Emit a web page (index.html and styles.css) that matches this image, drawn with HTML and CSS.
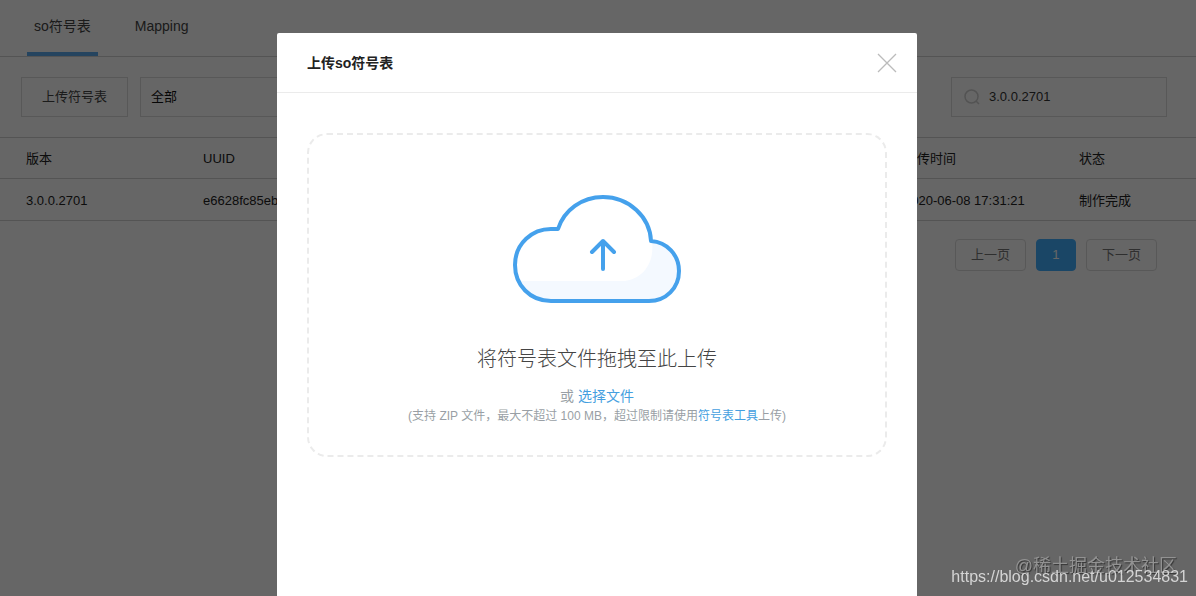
FILE: index.html
```html
<!DOCTYPE html>
<html lang="zh-CN">

<head>
    <meta charset="UTF-8">
    <meta name="viewport" content="width=device-width, initial-scale=1.0">
    <title>符号表管理</title>
    <link rel="stylesheet" href="styles.css">
</head>

<body>
    <main class="page">
        <nav class="tabs">
            <a class="tab active" href="#so">so符号表</a>
            <a class="tab" href="#mapping">Mapping</a>
        </nav>

        <div class="toolbar">
            <button class="btn-upload" type="button">上传符号表</button>
            <select class="filter" aria-label="版本">
                <option>全部</option>
            </select>
            <label class="search">
                <svg class="search-icon" viewBox="0 0 16 16" aria-hidden="true">
                    <circle cx="7.5" cy="7.5" r="6.5" />
                    <path d="M12 12l3 3" />
                </svg>
                <input type="text" value="3.0.0.2701" aria-label="搜索版本">
            </label>
        </div>

        <table class="list">
            <thead>
                <tr>
                    <th class="col-version">版本</th>
                    <th>UUID</th>
                    <th class="col-time">上传时间</th>
                    <th class="col-status">状态</th>
                </tr>
            </thead>
            <tbody>
                <tr>
                    <td>3.0.0.2701</td>
                    <td>e6628fc85eb3</td>
                    <td>2020-06-08 17:31:21</td>
                    <td>制作完成</td>
                </tr>
            </tbody>
        </table>

        <div class="pagination">
            <button class="page-btn" type="button">上一页</button>
            <button class="page-btn current" type="button">1</button>
            <button class="page-btn" type="button">下一页</button>
        </div>
    </main>

    <div class="overlay">
        <section class="modal" role="dialog" aria-labelledby="modalTitle">
            <header class="modal-header">
                <h2 id="modalTitle">上传so符号表</h2>
                <button class="close" type="button" aria-label="关闭">
                    <svg viewBox="0 0 20 20" aria-hidden="true">
                        <path d="M1 1l18 18M19 1L1 19" />
                    </svg>
                </button>
            </header>
            <div class="modal-body">
                <div class="dropzone">
                    <svg class="cloud" viewBox="0 0 168 108" aria-hidden="true">
                        <path class="cloud-shade" d="M6 86H112C128 84 142 70 139 46C154 47 166 60 166 76C166 93 153 106 136 106H38C24 104 12 98 6 86Z" />
                        <path class="cloud-line" d="M38 106C17 106 2 90 2 70C2 49 19 33 40 34H45C51 15 69 2 90 2C116 2 137 22 138 46C154 47 166 60 166 76C166 93 153 106 136 106Z" />
                        <path class="cloud-line" d="M90 74V46M79 57L90 46L101 57" />
                    </svg>
                    <p class="drop-title">将符号表文件拖拽至此上传</p>
                    <p class="drop-choose">或 <a href="#file">选择文件</a></p>
                    <p class="drop-tip">(支持 ZIP 文件，最大不超过 100 MB，超过限制请使用<a href="#tool">符号表工具</a>上传)</p>
                </div>
            </div>
        </section>
    </div>

    <div class="mark mark-site">@稀土掘金技术社区</div>
    <div class="mark mark-url">https://blog.csdn.net/u012534831</div>
</body>

</html>
```

FILE: styles.css
```css
* {
    box-sizing: border-box;
}

body {
    margin: 0;
    height: 100vh;
    overflow: hidden;
    background: #fff;
    color: #333;
    font-family: "Liberation Sans", "Noto Sans CJK SC", sans-serif;
    font-size: 13px;
    line-height: 20px;
}

a {
    text-decoration: none;
}

button,
input,
select {
    font: inherit;
    color: inherit;
}

p,
h2 {
    margin: 0;
}

/* page behind the dialog */
.tabs {
    display: flex;
    gap: 30px;
    height: 57px;
    padding: 0 27px;
    border-bottom: 1px solid #d2d2d2;
}

.tab {
    height: 56px;
    padding: 0 7px;
    border-bottom: 4px solid transparent;
    color: #444;
    font-size: 14px;
    line-height: 52px;
}

.tab.active {
    border-bottom-color: #5cabee;
}

.toolbar {
    display: flex;
    gap: 12px;
    padding: 20px 29px 20px 21px;
}

.btn-upload {
    height: 40px;
    padding: 0 20px;
    border: 1px solid #dcdcdc;
    background: #fff;
    color: #444;
}

.filter {
    width: 180px;
    height: 40px;
    padding: 0 10px;
    border: 1px solid #dcdcdc;
    background: #fff;
    color: #111;
    appearance: none;
}

.search {
    display: flex;
    align-items: center;
    gap: 9px;
    width: 216px;
    height: 40px;
    margin-left: auto;
    padding: 0 12px;
    border: 1px solid #dcdcdc;
}

.search-icon {
    flex: none;
    width: 16px;
    height: 16px;
    fill: none;
    stroke: #d0d0d0;
    stroke-width: 1.5;
}

.search input {
    width: 100%;
    padding: 0;
    border: 0;
    outline: 0;
    background: transparent;
}

.list {
    width: 100%;
    border-collapse: collapse;
    table-layout: fixed;
    border-top: 1px solid #d2d2d2;
}

.list th,
.list td {
    height: 41px;
    padding: 2px 0 0;
    border-bottom: 1px solid #d2d2d2;
    color: #222;
    font-weight: normal;
    text-align: left;
}

.list td {
    height: 42px;
}

.list th:first-child,
.list td:first-child {
    padding-left: 26px;
}

.col-version {
    width: 203px;
}

.col-time {
    width: 175px;
}

.col-status {
    width: 117px;
}

.pagination {
    display: flex;
    justify-content: flex-end;
    gap: 10px;
    padding: 18px 39px;
}

.page-btn {
    height: 32px;
    padding: 0 15px;
    border: 1px solid #dcdcdc;
    border-radius: 4px;
    background: #fff;
    color: #777;
}

.page-btn.current {
    min-width: 40px;
    border-color: #43b0ff;
    background: #43b0ff;
    color: #fff;
}

/* dialog */
.overlay {
    position: fixed;
    inset: 0;
    display: flex;
    justify-content: center;
    padding: 33px 2px 0 0;
    background: rgba(0, 0, 0, 0.6);
}

.modal {
    width: 640px;
    border-radius: 2px 2px 0 0;
    background: #fff;
}

.modal-header {
    display: flex;
    align-items: center;
    justify-content: space-between;
    height: 60px;
    padding: 0 20px 0 30px;
    border-bottom: 1px solid #ebebeb;
}

.modal-header h2 {
    color: #222;
    font-size: 14px;
}

.close {
    width: 20px;
    height: 20px;
    padding: 0;
    border: 0;
    background: none;
    cursor: pointer;
}

.close svg {
    display: block;
    fill: none;
    stroke: #bbb;
    stroke-width: 1.3;
}

.modal-body {
    padding: 40px 30px;
}

.dropzone {
    display: flex;
    flex-direction: column;
    align-items: center;
    padding: 60px 20px 29px;
    border: 2px dashed #ebebeb;
    border-radius: 20px;
    color: #999fa5;
    text-align: center;
}

.dropzone a {
    color: #459fe0;
}

.cloud {
    width: 168px;
    height: 108px;
    margin-bottom: 41px;
}

.cloud-shade {
    fill: #f4f9ff;
}

.cloud-line {
    fill: none;
    stroke: #45a1ec;
    stroke-width: 4;
    stroke-linecap: round;
    stroke-linejoin: round;
}

.drop-title {
    margin-bottom: 12px;
    color: #444;
    font-size: 20px;
    font-weight: 300;
    line-height: 30px;
}

.drop-choose {
    font-size: 14px;
}

.drop-tip {
    font-size: 12px;
}

/* watermarks over everything */
.mark {
    position: fixed;
    white-space: nowrap;
}

.mark-site {
    right: 19px;
    bottom: 15px;
    color: #929292;
    font-size: 18px;
    line-height: 30px;
    text-shadow: 1px 1px 1px #333;
}

.mark-url {
    right: 8px;
    bottom: 9px;
    color: #d4d4d4;
    font-size: 16px;
}
```
